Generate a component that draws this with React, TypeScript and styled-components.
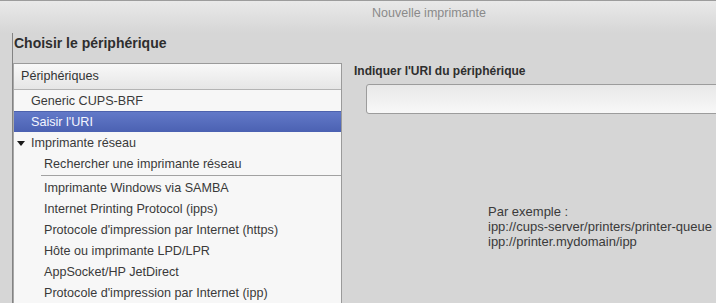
import React from 'react';
import styled, { createGlobalStyle } from 'styled-components';

const Global = createGlobalStyle`
  html, body { margin: 0; padding: 0; background: #d6d6d6; overflow: hidden; }
  body { font-family: "Liberation Sans", Arial, sans-serif; color: #3c3c3c; }
`;

const Window = styled.div`
  width: 716px;
  height: 303px;
  box-sizing: border-box;
  display: flex;
  flex-direction: column;
  overflow: hidden;
  background: #d6d6d6;
  border-top: 1px solid #9c9c9c;
`;

const TitleBar = styled.div`
  height: 32px;
  flex-shrink: 0;
  box-sizing: border-box;
  padding: 5px 0 0 372px;
  background: linear-gradient(#e9e9e9, #d6d6d6);
  font-size: 12.5px;
  line-height: 15px;
  color: #8a8a8a;
`;

const Body = styled.div`
  flex: 1;
  display: flex;
  min-height: 0;
`;

const LeftPane = styled.div`
  width: 329px;
  margin-left: 12px;
  flex-shrink: 0;
  border-left: 1px solid #838383;
  display: flex;
  flex-direction: column;
`;

const Heading = styled.div`
  height: 30px;
  box-sizing: border-box;
  padding: 2px 0 0 1px;
  font-size: 14px;
  line-height: 17px;
  font-weight: bold;
  color: #2e2e2e;
`;

const ListBox = styled.div`
  flex: 1;
  background: #f7f7f7;
  border: 1px solid #9a9a9a;
  border-left: 1px solid #a8a8a8;
  border-bottom: none;
  overflow: hidden;
`;

const ListHeader = styled.div`
  height: 25px;
  border-bottom: 1px solid #b4b4b4;
  background: linear-gradient(#f8f8f8, #e6e6e6);
  padding-left: 7px;
  font-size: 12.6px;
  line-height: 25px;
  color: #333;
`;

const Row = styled.div<{ $level: number; $selected?: boolean }>`
  height: 21px;
  box-sizing: border-box;
  display: flex;
  align-items: center;
  padding-left: ${(p) => (p.$level === 0 ? 17 : 30)}px;
  font-size: 12.6px;
  white-space: nowrap;
  color: ${(p) => (p.$selected ? '#f4f6ff' : '#3a3a3a')};
  background: ${(p) =>
    p.$selected ? 'linear-gradient(#6279c8, #4b61b2)' : 'transparent'};
  border-top: 1px solid ${(p) => (p.$selected ? '#4d62ad' : 'transparent')};
`;

const Expander = styled.span`
  width: 0;
  height: 0;
  margin-left: -14px;
  margin-right: 6px;
  border-left: 4px solid transparent;
  border-right: 4px solid transparent;
  border-top: 5px solid #1a1a1a;
`;

const Separator = styled.div`
  height: 1px;
  margin: 1px 0 1px 27px;
  background: #a2a2a2;
`;

const RightPane = styled.div`
  flex: 1;
  padding: 30px 0 0 12px;
  display: flex;
  flex-direction: column;
  min-width: 0;
`;

const Label = styled.div`
  font-size: 12px;
  font-weight: bold;
  line-height: 16px;
  color: #2e2e2e;
`;

const Entry = styled.div`
  margin: 5px 0 0 12px;
  width: 400px;
  height: 30px;
  box-sizing: border-box;
  border: 1px solid #9c9c9c;
  border-radius: 3px;
  background: linear-gradient(#e8e8e8, #f8f8f8);
`;

const Example = styled.div`
  margin: 90px 0 0 134px;
  font-size: 13px;
  line-height: 15px;
  color: #3a3a3a;
  white-space: nowrap;
`;

type Item = { label: string; level: number; selected?: boolean; expander?: boolean };

const top: Item[] = [
  { label: 'Generic CUPS-BRF', level: 0 },
  { label: "Saisir l'URI", level: 0, selected: true },
  { label: 'Imprimante réseau', level: 0, expander: true },
  { label: 'Rechercher une imprimante réseau', level: 1 },
];

const network: Item[] = [
  { label: 'Imprimante Windows via SAMBA', level: 1 },
  { label: 'Internet Printing Protocol (ipps)', level: 1 },
  { label: "Protocole d'impression par Internet (https)", level: 1 },
  { label: 'Hôte ou imprimante LPD/LPR', level: 1 },
  { label: 'AppSocket/HP JetDirect', level: 1 },
  { label: "Protocole d'impression par Internet (ipp)", level: 1 },
];

const renderRow = (it: Item) => (
  <Row key={it.label} $level={it.level} $selected={it.selected}>
    {it.expander && <Expander />}
    {it.label}
  </Row>
);

export default function App() {
  return (
    <>
      <Global />
      <Window>
        <TitleBar>Nouvelle imprimante</TitleBar>
        <Body>
          <LeftPane>
            <Heading>Choisir le périphérique</Heading>
            <ListBox>
              <ListHeader>Périphériques</ListHeader>
              {top.map(renderRow)}
              <Separator />
              {network.map(renderRow)}
            </ListBox>
          </LeftPane>
          <RightPane>
            <Label>Indiquer l'URI du périphérique</Label>
            <Entry />
            <Example>
              Par exemple :<br />
              ipp://cups-server/printers/printer-queue<br />
              ipp://printer.mydomain/ipp
            </Example>
          </RightPane>
        </Body>
      </Window>
    </>
  );
}
